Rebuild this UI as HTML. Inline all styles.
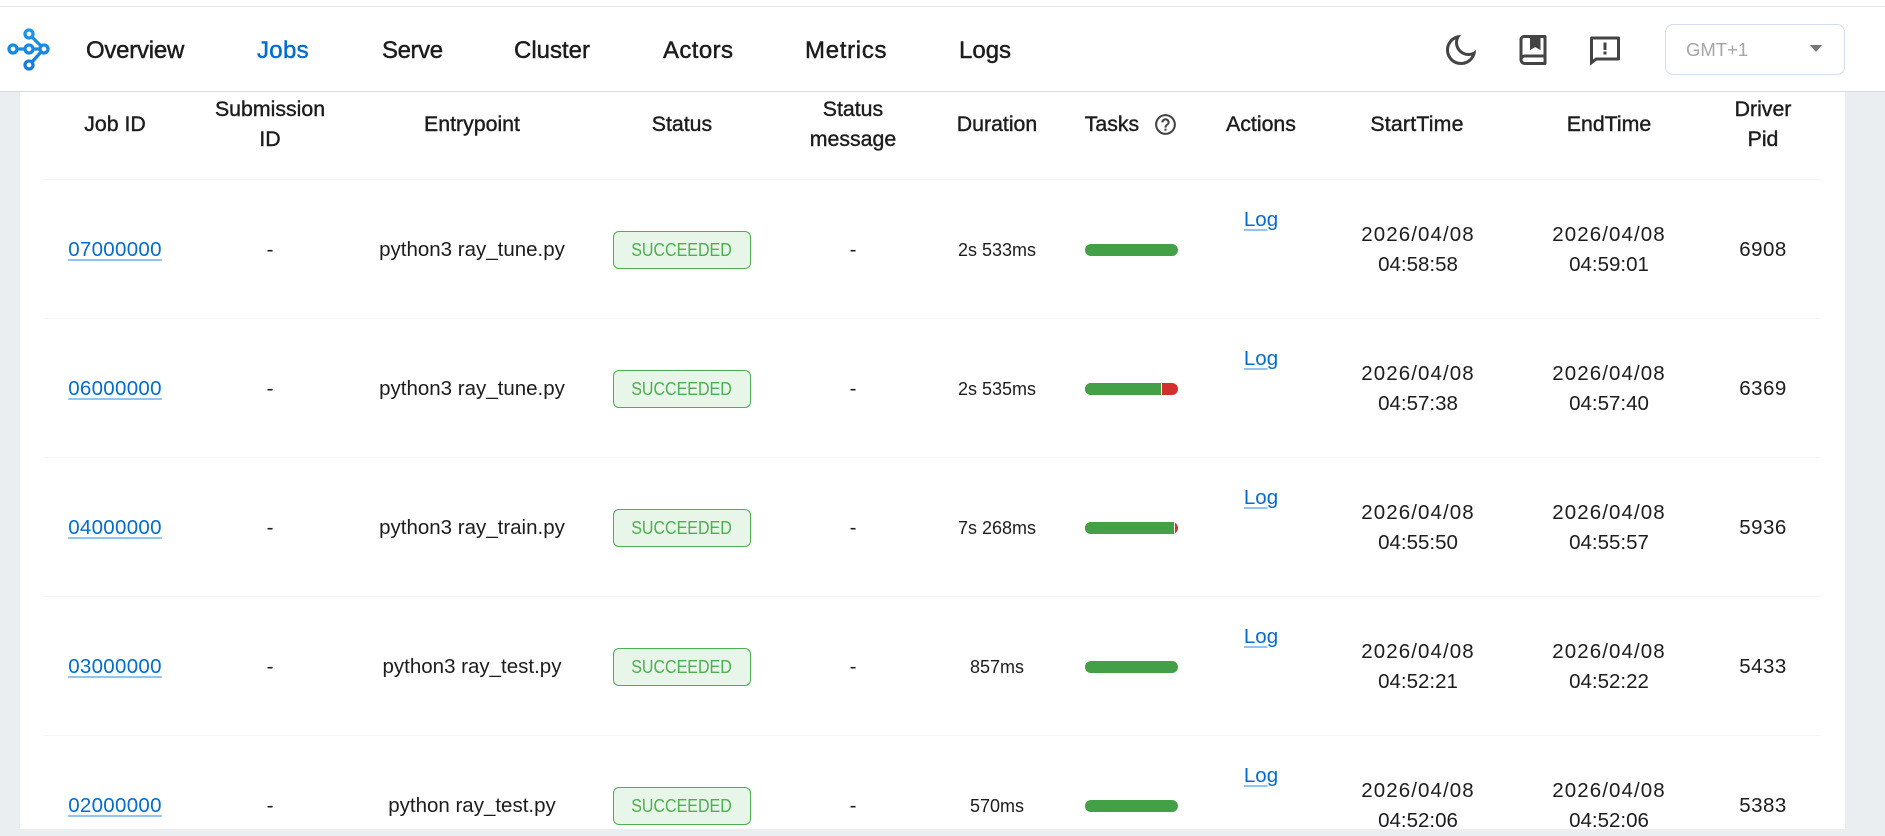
<!DOCTYPE html>
<html>
<head>
<meta charset="utf-8">
<title>Jobs</title>
<style>
html,body{margin:0;padding:0;width:1885px;height:829px;overflow:hidden;background:#ebeef1;font-family:"Liberation Sans",sans-serif;color:#1c1c1c}
#main{position:absolute;left:20px;top:0;width:1825px;height:829px;background:#fff}
#nav{position:absolute;left:0;top:0;width:1885px;height:91px;background:#fff;border-bottom:1px solid #d5dbe2}
#topline{position:absolute;left:0;top:6px;width:1885px;height:1px;background:#e1e4e8}
.n{position:absolute;top:33px;line-height:36px;font-size:24px;color:#1c1c1c;-webkit-text-stroke:.45px currentColor;white-space:nowrap}
.h{position:absolute;width:300px;margin-left:-150px;text-align:center;font-size:21.3px;line-height:30px;-webkit-text-stroke:.4px currentColor;white-space:nowrap}
.sep{position:absolute;left:44px;width:1777px;height:1px;background:#f6f6f6}
.r{position:absolute;left:0;width:1885px;height:0}
.c{position:absolute;width:300px;margin-left:-150px;top:-14px;line-height:30px;text-align:center;font-size:20.5px;white-space:nowrap}
.t{top:-29px}
.t span{letter-spacing:1.1px}
.p{letter-spacing:.5px}
.d{font-size:18px}
a{color:#036dcf;text-decoration:underline;text-decoration-color:#93c3ef;text-decoration-thickness:2px;text-underline-offset:3px}
.j{letter-spacing:.3px}
.l{top:-44px}
.b{position:absolute;left:613px;top:-18.5px;width:136px;height:36px;border:1px solid #4caf50;border-radius:6px;background:#e8f5e9;color:#4caf50;text-align:center;line-height:37px;font-size:18px;white-space:nowrap}
.b span{display:inline-block;transform:scaleX(.89)}
.bar{position:absolute;left:1085px;top:-5.5px;width:93px;height:12px;border-radius:6px;overflow:hidden;background:#d32f2f}
.bar i{position:absolute;left:0;top:0;height:12px;background:#43a047;border-right:1px solid #fff}
svg{position:absolute}
</style>
</head>
<body>
<div id="main"></div>

<div class="h" style="left:115px;top:109px">Job ID</div>
<div class="h" style="left:270px;top:94px">Submission<br>ID</div>
<div class="h" style="left:472px;top:109px">Entrypoint</div>
<div class="h" style="left:682px;top:109px">Status</div>
<div class="h" style="left:853px;top:94px">Status<br>message</div>
<div class="h" style="left:997px;top:109px">Duration</div>
<div class="h" style="left:1112px;top:109px">Tasks</div>
<svg style="left:1152.5px;top:111.5px" width="25" height="25" viewBox="0 0 24 24" fill="#444"><path d="M11 18h2v-2h-2v2zm1-16C6.48 2 2 6.48 2 12s4.48 10 10 10 10-4.48 10-10S17.52 2 12 2zm0 18c-4.41 0-8-3.59-8-8s3.59-8 8-8 8 3.59 8 8-3.59 8-8 8zm0-14c-2.21 0-4 1.79-4 4h2c0-1.1.9-2 2-2s2 .9 2 2c0 2-3 1.75-3 5h2c0-2.25 3-2.5 3-5 0-2.21-1.79-4-4-4z"/></svg>
<div class="h" style="left:1261px;top:109px">Actions</div>
<div class="h" style="left:1417px;top:109px;letter-spacing:.2px">StartTime</div>
<div class="h" style="left:1609px;top:109px">EndTime</div>
<div class="h" style="left:1763px;top:94px">Driver<br>Pid</div>

<div class="sep" style="top:179px"></div>
<div class="sep" style="top:318px"></div>
<div class="sep" style="top:457px"></div>
<div class="sep" style="top:596px"></div>
<div class="sep" style="top:735px"></div>

<div class="r" style="top:249px">
<div class="c j" style="left:115px"><a>07000000</a></div><div class="c" style="left:270px">-</div><div class="c" style="left:472px">python3 ray_tune.py</div>
<div class="b"><span>SUCCEEDED</span></div><div class="c" style="left:853px">-</div><div class="c d" style="left:997px">2s 533ms</div>
<div class="bar" style="background:#43a047"></div>
<div class="c l" style="left:1261px"><a>Log</a></div>
<div class="c t" style="left:1418px"><span>2026/04/08</span><br>04:58:58</div><div class="c t" style="left:1609px"><span>2026/04/08</span><br>04:59:01</div><div class="c p" style="left:1763px">6908</div>
</div>

<div class="r" style="top:388px">
<div class="c j" style="left:115px"><a>06000000</a></div><div class="c" style="left:270px">-</div><div class="c" style="left:472px">python3 ray_tune.py</div>
<div class="b"><span>SUCCEEDED</span></div><div class="c" style="left:853px">-</div><div class="c d" style="left:997px">2s 535ms</div>
<div class="bar"><i style="width:76px"></i></div>
<div class="c l" style="left:1261px"><a>Log</a></div>
<div class="c t" style="left:1418px"><span>2026/04/08</span><br>04:57:38</div><div class="c t" style="left:1609px"><span>2026/04/08</span><br>04:57:40</div><div class="c p" style="left:1763px">6369</div>
</div>

<div class="r" style="top:527px">
<div class="c j" style="left:115px"><a>04000000</a></div><div class="c" style="left:270px">-</div><div class="c" style="left:472px">python3 ray_train.py</div>
<div class="b"><span>SUCCEEDED</span></div><div class="c" style="left:853px">-</div><div class="c d" style="left:997px">7s 268ms</div>
<div class="bar"><i style="width:89px"></i></div>
<div class="c l" style="left:1261px"><a>Log</a></div>
<div class="c t" style="left:1418px"><span>2026/04/08</span><br>04:55:50</div><div class="c t" style="left:1609px"><span>2026/04/08</span><br>04:55:57</div><div class="c p" style="left:1763px">5936</div>
</div>

<div class="r" style="top:666px">
<div class="c j" style="left:115px"><a>03000000</a></div><div class="c" style="left:270px">-</div><div class="c" style="left:472px">python3 ray_test.py</div>
<div class="b"><span>SUCCEEDED</span></div><div class="c" style="left:853px">-</div><div class="c d" style="left:997px">857ms</div>
<div class="bar" style="background:#43a047"></div>
<div class="c l" style="left:1261px"><a>Log</a></div>
<div class="c t" style="left:1418px"><span>2026/04/08</span><br>04:52:21</div><div class="c t" style="left:1609px"><span>2026/04/08</span><br>04:52:22</div><div class="c p" style="left:1763px">5433</div>
</div>

<div class="r" style="top:805px">
<div class="c j" style="left:115px"><a>02000000</a></div><div class="c" style="left:270px">-</div><div class="c" style="left:472px">python ray_test.py</div>
<div class="b"><span>SUCCEEDED</span></div><div class="c" style="left:853px">-</div><div class="c d" style="left:997px">570ms</div>
<div class="bar" style="background:#43a047"></div>
<div class="c l" style="left:1261px"><a>Log</a></div>
<div class="c t" style="left:1418px"><span>2026/04/08</span><br>04:52:06</div><div class="c t" style="left:1609px"><span>2026/04/08</span><br>04:52:06</div><div class="c p" style="left:1763px">5383</div>
</div>

<div id="nav">
<div id="topline"></div>
<svg style="left:0;top:20px" width="60" height="60" viewBox="0 0 60 60" fill="none" stroke-width="3.3">
<defs><linearGradient id="g" gradientUnits="userSpaceOnUse" x1="29" y1="8" x2="29" y2="52"><stop offset="0" stop-color="#1b9ae6"/><stop offset="1" stop-color="#1976d8"/></linearGradient></defs>
<g stroke="url(#g)">
<path d="M17 29H25M33 29H40M32 17L41 26M32 42L41 32"/>
<circle cx="29" cy="14" r="4"/><circle cx="13" cy="29" r="4"/><circle cx="29" cy="29" r="4"/><circle cx="44" cy="29" r="4"/><circle cx="29" cy="45" r="4"/>
</g>
</svg>
<div class="n" style="left:86px;letter-spacing:-.25px">Overview</div>
<div class="n" style="left:257px;color:#036dcf;letter-spacing:.3px">Jobs</div>
<div class="n" style="left:382px;letter-spacing:-.4px">Serve</div>
<div class="n" style="left:514px">Cluster</div>
<div class="n" style="left:663px;letter-spacing:.4px">Actors</div>
<div class="n" style="left:805px;letter-spacing:.7px">Metrics</div>
<div class="n" style="left:959px">Logs</div>
<svg style="left:1443px;top:32px" width="36" height="36" viewBox="0 0 24 24" fill="#444"><path d="M10 7a7 7 0 0 0 12 4.9v.1c0 5.523-4.477 10-10 10S2 17.523 2 12 6.477 2 12 2h.1A6.979 6.979 0 0 0 10 7zm-6 5a8 8 0 0 0 15.062 3.762A9 9 0 0 1 8.238 4.938 7.999 7.999 0 0 0 4 12z"/></svg>
<svg style="left:1515px;top:32px" width="36" height="36" viewBox="0 0 24 24" fill="#444"><path d="M3 18.5V5a3 3 0 0 1 3-3h14a1 1 0 0 1 1 1v18a1 1 0 0 1-1 1H6.5A3.5 3.5 0 0 1 3 18.5zM19 20v-3H6.5a1.5 1.5 0 0 0 0 3H19zM10 4H6a1 1 0 0 0-1 1v10.337A3.486 3.486 0 0 1 6.5 15H19V4h-2v8l-3.5-2-3.5 2V4z"/><path d="M10 3h7v9l-3.5-2-3.5 2z"/></svg>
<svg style="left:1587px;top:31.5px" width="36" height="36" viewBox="0 0 24 24" fill="#444"><path d="M6.455 19L2 22.5V4a1 1 0 0 1 1-1h18a1 1 0 0 1 1 1v14a1 1 0 0 1-1 1H6.455zm-.692-2H20V5H4v13.385L5.763 17zM11 13h2v2h-2v-2zm0-6h2v5h-2V7z"/></svg>
<div style="position:absolute;left:1665px;top:24px;width:178px;height:49px;border:1px solid #d3dfea;border-radius:8px;background:#fff"></div>
<div style="position:absolute;left:1686px;top:32px;line-height:36px;font-size:18.5px;color:#a6a6a6">GMT+1</div>
<div style="position:absolute;left:1810px;top:44.5px;width:0;height:0;border-left:6.5px solid transparent;border-right:6.5px solid transparent;border-top:7px solid #777"></div>
</div>
</body>
</html>
